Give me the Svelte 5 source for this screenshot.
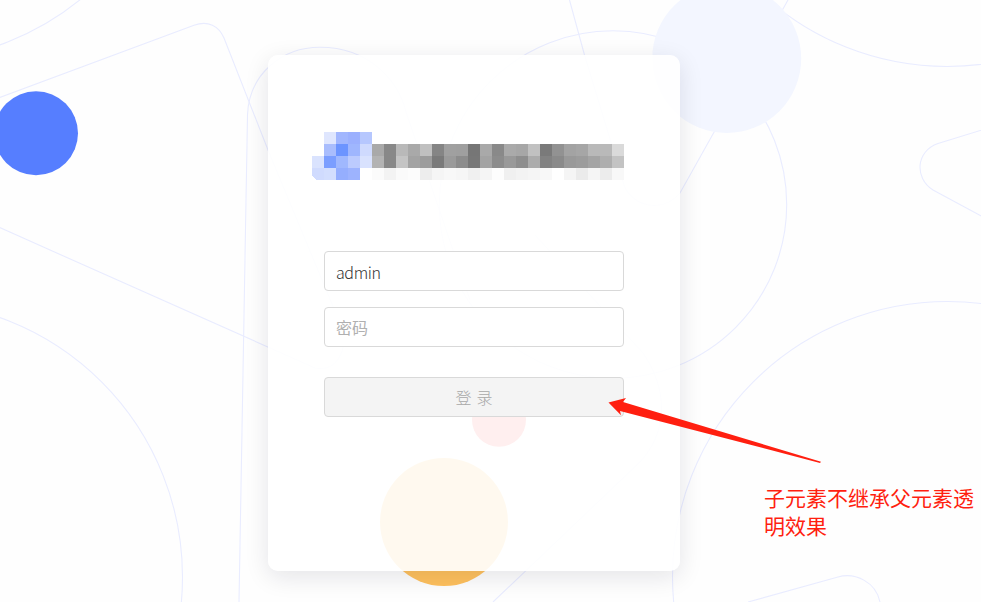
<script>
  let username = $state('admin');
  let password = $state('');

  const CELL = 12;
  const rows = [
    [1, 'dfe6fe a1b6fe 9bb0fe b6c7fe'],
    [1, 'a9bdfd 6c94ff 9fb6fe cfdafe a9a9a9 888888 b9b9b9 a9a9a9 c0c0c0 858585 a0a0a0 9f9f9f 767676 a9a9a9 898989 aaaaaa a7a7a7 c1c1c1 7a7a7a 929292 a3a3a3 a6a6a6 b9b9b9 b9b9b9 dadada'],
    [0, 'dae3fe 7b9eff a0b8fe bccbfe d9e2fe b3b3b3 888888 c4c4c4 a3a3a3 9c9c9c 7a7a7a 9a9a9a 8c8c8c 777777 a3a3a3 8c8c8c 999999 8e8e8e acacac 828282 8a8a8a 999999 9c9c9c a4a4a4 aeaeae c3c3c3'],
    [0, 'd0dbfe d3defe 95aefe 9db3fe ffffff fbfbfb f3f3f3 fafafa fcfcfc ededed f5f5f5 f8f8f8 f6f6f6 f0f0f0 f5f5f5 fdfdfd f0f0f0 f3f3f3 f5f5f5 f8f8f8 ffffff f5f5f5 ebebeb f5f5f5 ececec f8f8f8']
  ];
  const cells = rows.flatMap(([start, colors], y) =>
    colors.split(' ').map((c, i) => ({ x: (start + i) * CELL, y: y * CELL, fill: '#' + c }))
  );
</script>

<main class="page">
  <svg class="backdrop" viewBox="0 0 981 602" aria-hidden="true">
    <g class="lines">
      <circle cx="-93" cy="-214" r="275" />
      <circle cx="-93" cy="577" r="275.5" />
      <circle cx="613" cy="204.5" r="173.7" />
      <circle cx="947" cy="-206.5" r="273" />
      <circle cx="947.5" cy="576.5" r="275" />
      <path d="M-5 99.3 L194 25.3 C208 20 219 26 224 38 L268 150 L342 328 C348 352 336 372 315 368 L-5 225.5" />
      <path d="M239 602 L247.5 115 C249 74 282 47.3 320 47.3 C370 47.3 399 82 406 112 L470 300" />
      <path d="M569.5 0 L584.5 55 L624 185 C631 205 661 215 680 193 L788 0" />
      <path d="M493 602 L641 461 C668 430 668 390 643 353 L535 235" />
      <path d="M985 129 L938 143.5 C916 151 914 178 933 190 L985 218" />
      <path d="M748 602 L838 577 C855 572 876 582 880 602" />
    </g>
    <circle cx="36" cy="133.2" r="42" fill="#567eff" />
    <circle cx="726.7" cy="58.5" r="74.5" fill="#f3f6ff" />
    <circle cx="499" cy="419.8" r="27" fill="#ff5a5a" />
    <circle cx="444" cy="522" r="64" fill="#ffc15d" />
  </svg>

  <form class="card" onsubmit={(e) => e.preventDefault()}>
    <svg class="logo" width="312" height="48" viewBox="0 0 312 48" shape-rendering="crispEdges" aria-hidden="true">
      {#each cells as c}
        <rect x={c.x} y={c.y} width={CELL} height={CELL} fill={c.fill} />
      {/each}
      <path d="M0 43 L4 48 H0Z" fill="#fff" />
    </svg>
    <input class="user" type="text" bind:value={username} />
    <input type="password" placeholder="密码" bind:value={password} />
    <button disabled>登 录</button>
  </form>

  <svg class="arrow" width="214" height="70" viewBox="608 397 214 70" aria-hidden="true">
    <path d="M608.5 402.4 L626 398 L623 401.9 L821 461.8 L820 462.9 L620 411 L621 415.3 Z" fill="#ff1f10" />
  </svg>
  <p class="note">子元素不继承父元素透明效果</p>
</main>

<style>
  :global(body) { margin: 0; }
  .page {
    position: relative;
    box-sizing: border-box;
    width: 981px;
    height: 602px;
    padding: 55px 0 0 268px;
    overflow: hidden;
    background: #fefefe;
    font-family: "Noto Sans CJK SC", "Noto Sans", sans-serif;
  }
  .backdrop {
    position: absolute;
    inset: 0;
    width: 981px;
    height: 602px;
  }
  .lines {
    fill: none;
    stroke: #e9ecff;
    stroke-width: 1.1;
  }
  .card {
    position: relative;
    box-sizing: border-box;
    display: flex;
    flex-direction: column;
    width: 412px;
    height: 516px;
    padding: 77px 56px 0;
    border-radius: 10px;
    background: rgba(255, 255, 255, 0.9);
    box-shadow: 0 6px 24px rgba(20, 22, 50, 0.11);
  }
  .logo {
    flex: none;
    display: block;
    margin: 0 0 71px -12px;
  }
  input, button {
    box-sizing: border-box;
    flex: none;
    width: 300px;
    height: 40px;
    margin: 0 0 16px;
    border: 1px solid #d9d9d9;
    border-radius: 4px;
    font: 300 16px "Noto Sans CJK SC", "Noto Sans", sans-serif;
    outline: none;
  }
  input {
    padding: 0 11px;
    background: #fff;
    color: #333;
  }
  .user {
    padding-top: 1px;
    letter-spacing: -0.4px;
  }
  input::placeholder {
    color: #b0b0b0;
    font-weight: 400;
    opacity: 1;
  }
  button {
    margin: 14px 0 0;
    padding: 0;
    background: #f4f4f4;
    color: #a8a8a8;
    word-spacing: 1.5px;
  }
  .arrow {
    position: absolute;
    left: 608px;
    top: 397px;
  }
  .note {
    position: absolute;
    left: 764px;
    top: 483px;
    width: 214px;
    margin: 0;
    color: #ff1f10;
    font-size: 21px;
    font-weight: 400;
    line-height: 28px;
  }
</style>
